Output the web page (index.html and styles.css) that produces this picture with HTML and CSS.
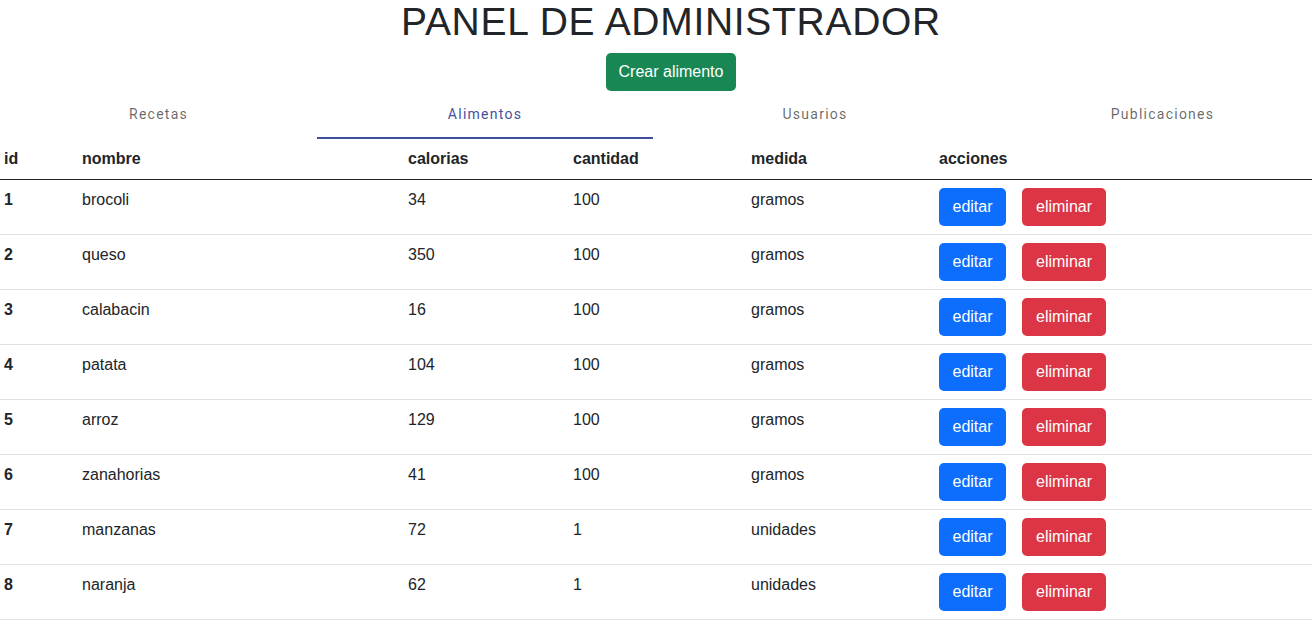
FILE: index.html
```html
<!DOCTYPE html>
<html lang="es">
<head>
<meta charset="utf-8">
<title>Panel de administrador</title>
<link rel="stylesheet" href="styles.css">
</head>
<body>
<div class="page">
<header class="top">
  <h1 class="title">PANEL DE ADMINISTRADOR</h1>
  <button class="btn btn-success">Crear alimento</button>
</header>
<nav class="tabs">
  <div class="tab t1">Recetas</div>
  <div class="tab t2 active">Alimentos</div>
  <div class="tab t3">Usuarios</div>
  <div class="tab t4">Publicaciones</div>
</nav>
<table class="table">
  <colgroup>
    <col class="c-id"><col class="c-nombre"><col class="c-cal"><col class="c-cant"><col class="c-med"><col>
  </colgroup>
  <thead>
    <tr><th>id</th><th>nombre</th><th>calorias</th><th>cantidad</th><th>medida</th><th>acciones</th></tr>
  </thead>
  <tbody>
    <tr><th>1</th><td>brocoli</td><td>34</td><td>100</td><td>gramos</td><td><button class="btn btn-primary">editar</button><button class="btn btn-danger">eliminar</button></td></tr>
    <tr><th>2</th><td>queso</td><td>350</td><td>100</td><td>gramos</td><td><button class="btn btn-primary">editar</button><button class="btn btn-danger">eliminar</button></td></tr>
    <tr><th>3</th><td>calabacin</td><td>16</td><td>100</td><td>gramos</td><td><button class="btn btn-primary">editar</button><button class="btn btn-danger">eliminar</button></td></tr>
    <tr><th>4</th><td>patata</td><td>104</td><td>100</td><td>gramos</td><td><button class="btn btn-primary">editar</button><button class="btn btn-danger">eliminar</button></td></tr>
    <tr><th>5</th><td>arroz</td><td>129</td><td>100</td><td>gramos</td><td><button class="btn btn-primary">editar</button><button class="btn btn-danger">eliminar</button></td></tr>
    <tr><th>6</th><td>zanahorias</td><td>41</td><td>100</td><td>gramos</td><td><button class="btn btn-primary">editar</button><button class="btn btn-danger">eliminar</button></td></tr>
    <tr><th>7</th><td>manzanas</td><td>72</td><td>1</td><td>unidades</td><td><button class="btn btn-primary">editar</button><button class="btn btn-danger">eliminar</button></td></tr>
    <tr><th>8</th><td>naranja</td><td>62</td><td>1</td><td>unidades</td><td><button class="btn btn-primary">editar</button><button class="btn btn-danger">eliminar</button></td></tr>
  </tbody>
</table>
</div>
</body>
</html>
```
FILE: styles.css
```css
* { box-sizing: border-box; }
html, body { margin: 0; padding: 0; }
html { overflow: hidden; }
body {
  font-family: "Liberation Sans", Arial, sans-serif;
  font-size: 16px;
  line-height: 24px;
  color: #212529;
  background: #fff;
}
.page { width: 1342px; }
.top {
  display: flex;
  flex-direction: column;
  align-items: center;
  padding-top: 3px;
}
.title {
  margin: 0;
  font-size: 39px;
  line-height: 38px;
  font-weight: 400;
  letter-spacing: 0.7px;
  color: #212529;
}
.btn {
  display: inline-block;
  font-family: "Liberation Sans", Arial, sans-serif;
  font-size: 16px;
  line-height: 24px;
  height: 38px;
  padding: 7px 13.5px;
  border: 0;
  border-radius: 5px;
  color: #fff;
  cursor: pointer;
}
.top .btn { margin-top: 12px; padding: 7px 13px; }
.btn-success { background: #198754; }
.btn-primary { background: #0d6efd; }
.btn-danger { background: #dc3545; margin-left: 16px; padding: 7px 14px; }
.tabs {
  display: flex;
}
.tab {
  height: 48px;
  display: flex;
  align-items: center;
  justify-content: center;
  font-family: Roboto, "Liberation Sans", sans-serif;
  font-size: 14px;
  font-weight: 400;
  letter-spacing: 1.25px;
  color: rgba(0,0,0,0.6);
  border-bottom: 2px solid transparent;
}
.t1 { flex: 0 0 317px; }
.t2 { flex: 0 0 336px; }
.t3 { flex: 0 0 324px; }
.t4 { flex: 1 1 auto; padding-left: 6px; }
.tab.active { color: #45509e; border-bottom-color: #3f4f9f; }
.table {
  width: 100%;
  border-collapse: collapse;
  table-layout: fixed;
}
.c-id { width: 78px; }
.c-nombre { width: 326px; }
.c-cal { width: 165px; }
.c-cant { width: 178px; }
.c-med { width: 188px; }
.table th, .table td {
  padding: 8px 4px;
  text-align: left;
  vertical-align: top;
  border-bottom: 1px solid #dee2e6;
}
.table th { font-weight: 700; }
.table thead th { border-bottom: 1px solid #212529; }
.table tbody tr:first-child th, .table tbody tr:first-child td { border-top: 1px solid #212529; }
.table td:last-child { white-space: nowrap; }
```
